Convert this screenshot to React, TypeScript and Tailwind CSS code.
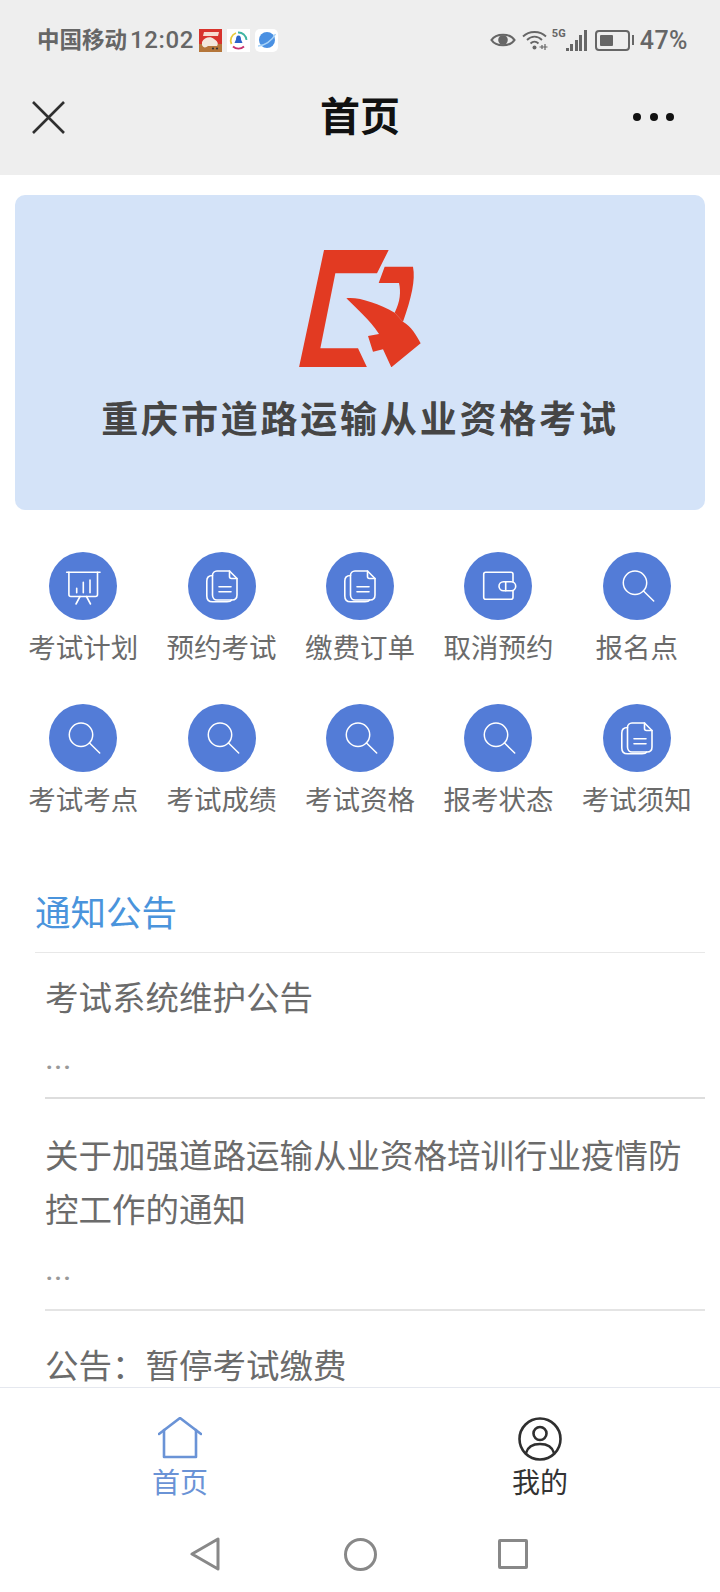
import React from 'react';

const cjk = "font-['Roboto','Noto_Sans_CJK_SC',sans-serif]";

const PlanIcon = () => (
  <svg width="68" height="68" viewBox="0 0 68 68" fill="none" stroke="#fff" strokeWidth="1.6" strokeLinecap="round" strokeLinejoin="round">
    <path d="M17.700 20.300H51" />
    <path d="M19.900 20.300V42.500a2 2 0 0 0 2 2H46.500a2 2 0 0 0 2-2V20.300" />
    <path d="M31 44.500L27 52M37.500 44.500L41.500 52" />
    <path d="M27.700 36.300V40.700M34.300 30.300V40.700M41 28V40.700" />
  </svg>
);

const DocIcon = () => (
  <svg width="68" height="68" viewBox="0 0 68 68" fill="none" stroke="#fff" strokeWidth="1.6" strokeLinecap="round" strokeLinejoin="round">
    <path d="M24.500 23.500C21 23.500 18.800 25.500 18.800 29V44C18.800 47.800 21 49.800 24.500 49.800H39C41.500 49.800 43 49 43.500 48" />
    <path d="M29 19H41.500L49 26.500V43C49 46 47 48 44 48H29C26.500 48 24.500 46 24.500 43V23.500C24.500 21 26.500 19 29 19Z" />
    <path d="M41.500 19V24.500C41.500 25.800 42.500 26.500 43.500 26.500H49" />
    <path d="M31 34.700H43M31 39.700H43" />
  </svg>
);

const WalletIcon = () => (
  <svg width="68" height="68" viewBox="0 0 68 68" fill="none" stroke="#fff" strokeWidth="1.6" strokeLinecap="round" strokeLinejoin="round">
    <path d="M49 29.700V22.300a2 2 0 0 0-2-2H21.700a2 2 0 0 0-2 2V45.300a2 2 0 0 0 2 2H47a2 2 0 0 0 2-2V38.700" />
    <rect x="35" y="29.700" width="16.700" height="9" rx="4.500" />
    <path d="M41.700 29.700V38.700" />
  </svg>
);

const SearchIcon = () => (
  <svg width="68" height="68" viewBox="0 0 68 68" fill="none" stroke="#fff" strokeWidth="1.5" strokeLinecap="round">
    <circle cx="32" cy="30.700" r="11.700" />
    <path d="M40.500 39L50.700 49" />
  </svg>
);

const menus = [
  { title: '考试计划', icon: <PlanIcon /> },
  { title: '预约考试', icon: <DocIcon /> },
  { title: '缴费订单', icon: <DocIcon /> },
  { title: '取消预约', icon: <WalletIcon /> },
  { title: '报名点', icon: <SearchIcon /> },
  { title: '考试考点', icon: <SearchIcon /> },
  { title: '考试成绩', icon: <SearchIcon /> },
  { title: '考试资格', icon: <SearchIcon /> },
  { title: '报考状态', icon: <SearchIcon /> },
  { title: '考试须知', icon: <DocIcon /> },
];

const StatusLeft = () => (
  <div className="flex items-center">
    <span className="text-[22.500px] font-bold text-[#666] leading-none">中国移动</span>
    <span className="ml-[3px] text-[24px] font-medium tracking-[0.6px] text-[#666] leading-none">12:02</span>
    <svg className="ml-[5px]" width="23" height="23" viewBox="0 0 23 23">
      <rect width="23" height="23" fill="#d8332c" />
      <rect y="15" width="23" height="8" fill="#b5763a" />
      <path d="M5 3H20L19 7H4Z" fill="#f7dcd0" />
      <path d="M3 13C5 8 12 7 15 10C18 12 20 14 18 17H9C7 19 4 19 3 16Z" fill="#f3e7dc" />
      <circle cx="14" cy="19.500" r="1.100" fill="#333" />
      <circle cx="18" cy="19.500" r="1.100" fill="#333" />
    </svg>
    <svg className="ml-[5px]" width="23" height="23" viewBox="0 0 23 23" fill="none">
      <rect width="23" height="23" fill="#fff" />
      <path d="M4.500 15A8 8 0 0 1 9 4" stroke="#e9c83a" strokeWidth="1.800" />
      <path d="M11 3.500A8 8 0 0 1 19.500 11" stroke="#3fb5a3" strokeWidth="1.800" />
      <path d="M6 17.500A8 8 0 0 0 17 17.500" stroke="#c8316e" strokeWidth="1.800" />
      <path d="M11.500 6.500C9.500 6.500 9 8.500 9 10.500L7.500 14H15.500L14 10.500C14 8.500 13.500 6.500 11.500 6.500Z" fill="#2b62c9" />
    </svg>
    <svg className="ml-[5px]" width="23" height="23" viewBox="0 0 23 23" fill="none">
      <rect width="23" height="23" rx="5" fill="#fff" />
      <circle cx="12" cy="11" r="8" fill="#4a90e2" />
      <path d="M3 17C9 17 17 12 20.500 5" stroke="#a8d3f7" strokeWidth="1.500" />
    </svg>
  </div>
);

const StatusRight = () => (
  <div className="flex items-center">
    <svg width="26" height="20" viewBox="0 0 26 20" fill="none">
      <path d="M1.500 10C6 3 20 3 24.500 10C20 17 6 17 1.500 10Z" stroke="#666" strokeWidth="2.200" />
      <circle cx="13" cy="10" r="4.800" fill="#666" />
    </svg>
    <svg className="ml-[6px]" width="26" height="22" viewBox="0 0 26 22" fill="none" stroke="#666" strokeWidth="1.800">
      <path d="M1 7.500C7 1.500 18 1.500 24 7.500" />
      <path d="M5 11C9.500 6.500 15.500 6.500 20 11" />
      <path d="M8.500 14.500C11 12 14 12 16.500 14.500" />
      <circle cx="12.500" cy="18.500" r="2" fill="#666" stroke="none" />
      <path d="M20 16V20M23 15V21M17.500 18H25.500" strokeWidth="1.200" />
    </svg>
    <div className="ml-[4px] flex items-end h-[22px]">
      <span className="self-start text-[11px] font-bold leading-[10px] text-[#666]">5G</span>
      <div className="flex items-end gap-[1.500px]">
        <div className="w-[3px] h-[3px] bg-[#666]" />
        <div className="w-[3px] h-[7px] bg-[#666]" />
        <div className="w-[3px] h-[11px] bg-[#666]" />
        <div className="w-[3px] h-[16px] bg-[#666]" />
        <div className="w-[3px] h-[21px] bg-[#666]" />
      </div>
    </div>
    <div className="ml-[8px] flex items-center">
      <div className="w-[35px] h-[21px] rounded-[4px] border-2 border-[#666] p-[3px]">
        <div className="w-[13px] h-full bg-[#666] rounded-[1px]" />
      </div>
      <div className="ml-[2px] w-[2px] h-[10px] bg-[#666]" />
    </div>
    <span className="ml-[6px] text-[25px] font-medium tracking-[0.5px] text-[#666] leading-none">47%</span>
  </div>
);

const Logo = () => (
  <svg width="121.700" height="117.300" viewBox="28 30 365 352" fill="#e23a22">
    <path d="M103 30H297L262 100H137L92 325H205L232 382H28Z" />
    <path d="M285 80H370C378 120 365 175 340 245L315 218C332 185 334 155 328 129H267Z" />
    <path d="M170 175C205 170 265 190 315 218L340 245C365 260 380 285 393 310L305 382L280 328L250 335L235 288L268 282C240 240 205 210 170 175Z" />
  </svg>
);

const App: React.FC = () => {
  return (
    <div className={`w-[720px] h-[1592px] flex flex-col bg-white overflow-hidden ${cjk}`}>
      <header className="bg-[#eeeeee] shrink-0 h-[175px]">
        <div className="h-[80px] pl-[37px] pr-[32px] flex items-center justify-between">
          <StatusLeft />
          <StatusRight />
        </div>
        <div className="h-[74px] grid grid-cols-[1fr_auto_1fr] items-center px-[32px]">
          <svg width="33" height="33" viewBox="0 0 33 33" stroke="#2f2f2f" strokeWidth="2.600">
            <path d="M1 1L32 32M32 1L1 32" />
          </svg>
          <h1 className="pt-[2px] text-[40px] font-bold text-[#111] leading-none">首页</h1>
          <div className="justify-self-end mr-[14px] flex gap-[8.500px]">
            <div className="w-[8px] h-[8px] rounded-full bg-[#111]" />
            <div className="w-[8px] h-[8px] rounded-full bg-[#111]" />
            <div className="w-[8px] h-[8px] rounded-full bg-[#111]" />
          </div>
        </div>
      </header>

      <main className="flex-1 min-h-0 overflow-hidden">
        <section className="mt-[20px] mx-[15px] h-[315px] rounded-[10px] bg-[#d4e3f8] flex flex-col items-center pt-[55px]">
          <Logo />
          <p className="mt-[32px] text-[37px] font-bold tracking-[2.800px] leading-[44px] text-[#454545] whitespace-nowrap">
            重庆市道路运输从业资格考试
          </p>
        </section>

        <section className="mt-[42px] px-[14px] grid grid-cols-5 gap-y-[37px]">
          {menus.map((menu, index) => (
            <div key={index} className="flex flex-col items-center">
              <div className="w-[68px] h-[68px] rounded-full bg-[#537cd7]">{menu.icon}</div>
              <span className="mt-[11px] text-[27.500px] leading-[36px] text-[#6b6b6b] whitespace-nowrap">{menu.title}</span>
            </div>
          ))}
        </section>

        <section className="mt-[69px] ml-[35px] mr-[15px]">
          <h2 className="text-[35.500px] leading-[52px] text-[#4a94dc] border-b border-[#e8e8e8] pb-[12px]">通知公告</h2>
          <div className="ml-[10px] text-[#6b6b6b] text-[33.500px] leading-[54px]">
            <div className="pt-[19px] pb-[12px] border-b-2 border-[#dddddd]">
              <p>考试系统维护公告</p>
              <p className="mt-[5px] text-[#999]">...</p>
            </div>
            <div className="pt-[31px] pb-[13px] border-b-2 border-[#e4e4e4]">
              <p>关于加强道路运输从业资格培训行业疫情防控工作的通知</p>
              <p className="mt-[4px] text-[#999]">...</p>
            </div>
            <div className="pt-[29px]">
              <p>公告：暂停考试缴费</p>
            </div>
          </div>
        </section>
      </main>

      <nav className="shrink-0 h-[123px] border-t border-[#e5e8ef] bg-white grid grid-cols-2">
        <div className="flex flex-col items-center pt-[29px]">
          <svg width="44" height="42" viewBox="0 0 44 42" fill="none" stroke="#6a93d6" strokeWidth="2.600" strokeLinecap="round" strokeLinejoin="round">
            <path d="M1 17L22 1L43 17" />
            <path d="M6 13V40H38V13" />
          </svg>
          <span className="mt-[5px] text-[28px] leading-[40px] text-[#6a93d6]">首页</span>
        </div>
        <div className="flex flex-col items-center pt-[29px]">
          <svg width="44" height="44" viewBox="0 0 44 44" fill="none" stroke="#2f2f2f" strokeWidth="2.600">
            <circle cx="22" cy="22" r="20.500" />
            <circle cx="22" cy="16.500" r="6.500" />
            <path d="M8 36C10 29 16 27 22 27C28 27 34 29 36 36" />
          </svg>
          <span className="mt-[3px] text-[28px] leading-[40px] text-[#333]">我的</span>
        </div>
      </nav>

      <div className="shrink-0 h-[82px] flex items-start pl-[190px] pt-[27px]">
        <svg width="30" height="34" viewBox="0 0 30 34" fill="none" stroke="#888" strokeWidth="3" strokeLinejoin="round" className="mr-[123.500px]">
          <path d="M2 17L28 2V32Z" />
        </svg>
        <div className="mt-[1px] w-[33px] h-[33px] rounded-full border-[3px] border-[#888]" />
        <div className="ml-[121px] mt-[2px] w-[30px] h-[30px] rounded-[2px] border-[3px] border-[#888]" />
      </div>
    </div>
  );
};

export default App;
